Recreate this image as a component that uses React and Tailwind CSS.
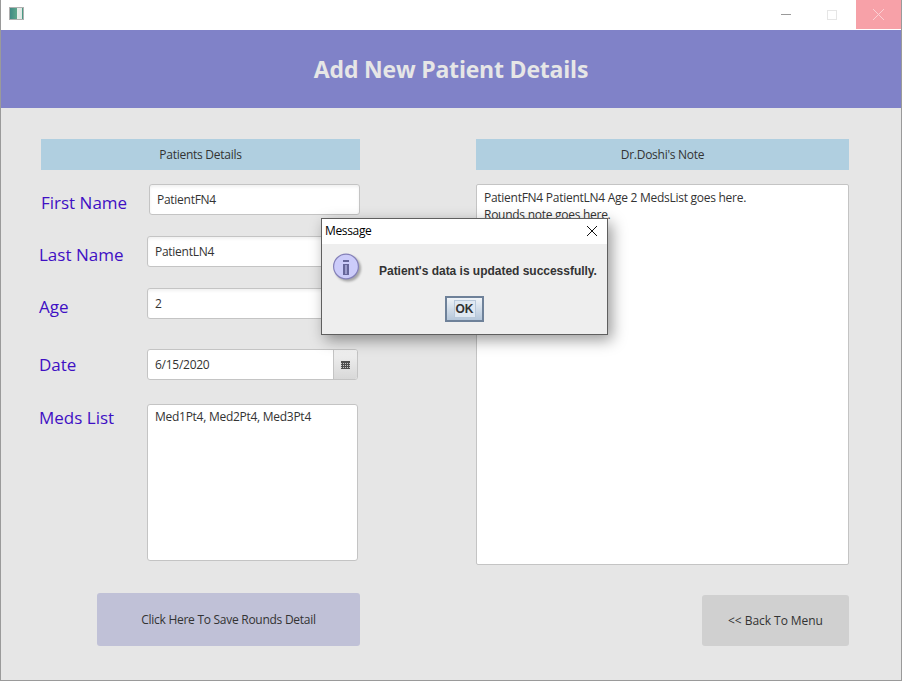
const uiFont = "font-['Open_Sans',sans-serif]";
const bodyText = "text-[12px] tracking-[-0.27px] text-[#333]";
const labelText = "text-[17px] text-[#3f10c4]";

function Field({ label, value, className = "" }) {
  return (
    <div className={`flex items-start ${className}`}>
      <span className={`mt-[7px] leading-[24px] ${labelText}`}>{label}</span>
      <div className={`ml-auto flex h-[31px] w-[211px] items-center rounded-[3px] border border-[#c4c4c4] bg-white px-[7px] shadow-[inset_0_2px_3px_rgba(0,0,0,0.06)] ${bodyText}`}>
        {value}
      </div>
    </div>
  );
}

function CalendarIcon() {
  return (
    <svg width="9" height="8" viewBox="0 0 9 8">
      <rect width="9" height="8" fill="#4f4f4f" />
      {[2, 4, 6].map((y) =>
        [0, 2, 4, 6, 8].map((x) => (
          <rect key={`${x}-${y}`} x={x} y={y} width="1" height="1" fill="#c8c8c8" />
        ))
      )}
    </svg>
  );
}

function InfoIcon() {
  return (
    <svg width="28" height="28" viewBox="0 0 28 28" className="drop-shadow-[2px_2px_1px_rgba(0,0,0,0.3)]">
      <circle cx="13" cy="13.5" r="12.4" fill="#ccccfa" stroke="#8480b8" strokeWidth="1.2" />
      <rect x="10" y="7" width="6" height="2" fill="#66669a" />
      <rect x="10" y="11" width="6" height="11" fill="#66669a" />
      <rect x="12" y="12" width="2" height="9" fill="#9c9ccc" />
    </svg>
  );
}

function MessageDialog() {
  return (
    <div className="absolute left-[320px] top-[218px] h-[117px] w-[287px] border border-[#5f5f5f] bg-[#eeeeee] shadow-[4px_5px_14px_rgba(0,0,0,0.4)]">
      <div className="flex h-[25px] items-center justify-between bg-white pb-[1px] pl-[3px] pr-[10px] text-[12px] text-black">
        <span className="tracking-[-0.35px]">Message</span>
        <svg width="10" height="10" viewBox="0 0 10 10">
          <path d="M0 0L10 10M10 0L0 10" stroke="#111" strokeWidth="1" />
        </svg>
      </div>
      <div className="flex h-[37px] items-start pl-[11px] pt-[9px]">
        <InfoIcon />
        <span className="ml-[18px] mt-[10px] font-['Liberation_Sans',sans-serif] text-[12px] font-bold leading-[16px] tracking-[-0.02px] text-[#333]">
          Patient's data is updated successfully.
        </span>
      </div>
      <div className="mt-[15px] flex justify-center">
        <button className="flex h-[26px] w-[39px] items-center justify-center border-[2px] border-[#6e8199] bg-gradient-to-b from-[#f0f4f8] to-[#b4c6da] font-['Liberation_Sans',sans-serif] text-[12px] font-bold text-[#333]">
          <span className="border border-[#b8c8da] bg-[#dfe8f2] px-[1px] leading-[16px]">OK</span>
        </button>
      </div>
    </div>
  );
}

export default function App() {
  return (
    <div className={`relative flex h-[681px] w-[902px] flex-col overflow-hidden border-b border-l border-r border-[#9a9a9a] bg-[#e6e6e6] ${uiFont}`}>
      {/* window title bar */}
      <div className="flex h-[30px] items-start bg-white">
        <div className="ml-[8px] mt-[7px] h-[13px] w-[15px] border border-[#b0b0b0] bg-[linear-gradient(90deg,#3f8a84_0%,#5fa88c_55%,#e8eeea_55%,#dfe8e4_90%,#4a9a84_90%)]" />
        <div className="ml-auto flex items-start">
          <div className="flex h-[29px] w-[46px] items-center justify-center">
            <div className="h-px w-[10px] bg-[#9a9a9a]" />
          </div>
          <div className="ml-[3px] flex h-[29px] w-[44px] items-center justify-center">
            <div className="mr-[4px] h-[10px] w-[10px] border border-[#e6e6e6]" />
          </div>
          <div className="flex h-[29px] w-[45px] items-center justify-center bg-[#f7a1a8]">
            <svg width="11" height="11" viewBox="0 0 11 11" className="mr-[1px]">
              <path d="M0 0L11 11M11 0L0 11" stroke="#fbd0d4" strokeWidth="1" />
            </svg>
          </div>
        </div>
      </div>

      <div className="flex h-[78px] items-center justify-center bg-[#8082c8] text-[23px] font-bold tracking-[-0.2px] text-[#e6e6e6]">
        Add New Patient Details
      </div>

      <div className="flex flex-1 items-start pl-[40px] pt-[31px]">
        {/* left column */}
        <div className="flex w-[319px] flex-col">
          <div className={`flex h-[31px] items-center justify-center bg-[#b0cfe0] ${bodyText}`}>
            Patients Details
          </div>
          <Field className="mt-[14px]" label="First Name" value="PatientFN4" />
          <Field className="-ml-[2px] mt-[21px] w-[319px]" label="Last Name" value="PatientLN4" />
          <Field className="-ml-[2px] mt-[21px] w-[319px]" label="Age" value="2" />
          <div className="-ml-[2px] mt-[30px] flex w-[319px] items-start">
            <span className={`mt-[4px] leading-[24px] ${labelText}`}>Date</span>
            <div className={`ml-auto flex h-[31px] w-[211px] overflow-hidden rounded-[3px] border border-[#c4c4c4] bg-white ${bodyText}`}>
              <div className="flex flex-1 items-center px-[7px]">6/15/2020</div>
              <div className="flex w-[24px] items-center justify-center border-l border-[#c4c4c4] bg-gradient-to-b from-[#f2f2f2] to-[#d8d8d8]">
                <CalendarIcon />
              </div>
            </div>
          </div>
          <div className="-ml-[2px] mt-[24px] flex w-[319px] items-start">
            <span className={`leading-[28px] ${labelText}`}>Meds List</span>
            <div className={`ml-auto h-[157px] w-[211px] rounded-[3px] border border-[#c4c4c4] bg-white px-[7px] pt-[3px] leading-[18px] ${bodyText}`}>
              Med1Pt4, Med2Pt4, Med3Pt4
            </div>
          </div>
          <button className={`ml-[56px] mt-[32px] flex h-[53px] w-[263px] items-center justify-center rounded-[3px] bg-[#c0c1d7] ${bodyText}`}>
            Click Here To Save Rounds Detail
          </button>
        </div>

        {/* right column */}
        <div className="ml-[116px] flex w-[373px] flex-col">
          <div className={`flex h-[31px] items-center justify-center bg-[#b0cfe0] ${bodyText}`}>
            Dr.Doshi's Note
          </div>
          <div className={`mt-[14px] h-[381px] rounded-[2px] border border-[#c4c4c4] bg-white px-[7px] pt-[4px] leading-[17px] ${bodyText}`}>
            PatientFN4 PatientLN4 Age 2 MedsList goes here.
            <br />
            Rounds note goes here.
          </div>
          <button className="ml-auto mt-[30px] flex h-[51px] w-[147px] items-center justify-center rounded-[3px] bg-[#d0d0d0] text-[12px] tracking-[-0.05px] text-[#333]">
            {"<< Back To Menu"}
          </button>
        </div>
      </div>

      <MessageDialog />
    </div>
  );
}
